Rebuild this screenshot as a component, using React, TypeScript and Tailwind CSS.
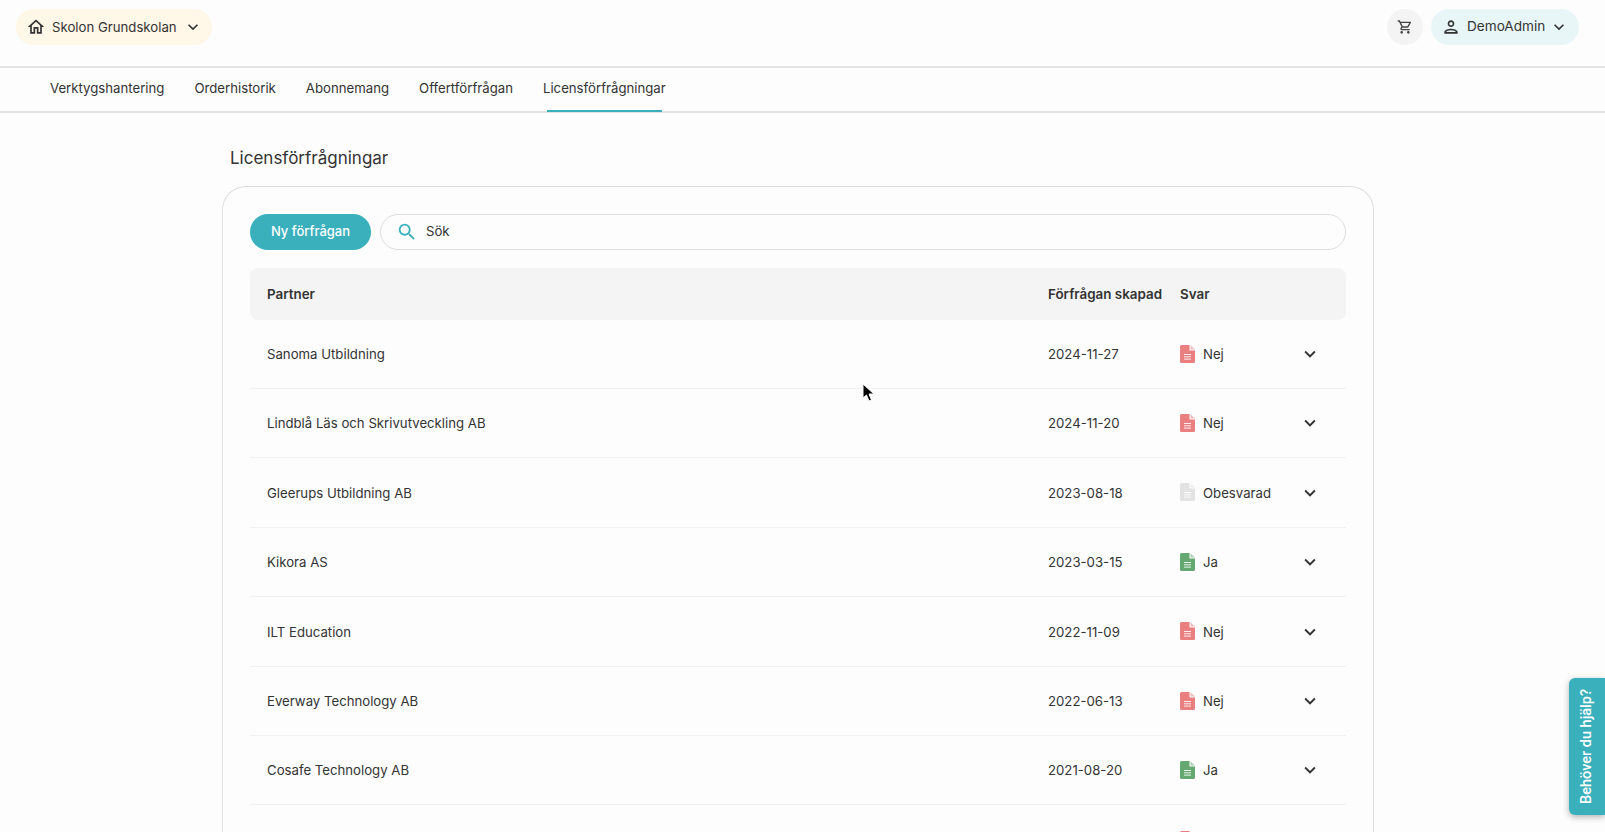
import { MdKeyboardArrowDown, MdOutlineHome, MdOutlinePerson, MdOutlineShoppingCart, MdSearch } from "react-icons/md";

type Answer = "Nej" | "Ja" | "Obesvarad";

const tabs = ["Verktygshantering", "Orderhistorik", "Abonnemang", "Offertförfrågan", "Licensförfrågningar"];

const rows: { partner: string; date: string; answer: Answer; height: string }[] = [
  { partner: "Sanoma Utbildning", date: "2024-11-27", answer: "Nej", height: "h-[69px]" },
  { partner: "Lindblå Läs och Skrivutveckling AB", date: "2024-11-20", answer: "Nej", height: "h-[69px]" },
  { partner: "Gleerups Utbildning AB", date: "2023-08-18", answer: "Obesvarad", height: "h-[70px]" },
  { partner: "Kikora AS", date: "2023-03-15", answer: "Ja", height: "h-[69px]" },
  { partner: "ILT Education", date: "2022-11-09", answer: "Nej", height: "h-[70px]" },
  { partner: "Everway Technology AB", date: "2022-06-13", answer: "Nej", height: "h-[69px]" },
  { partner: "Cosafe Technology AB", date: "2021-08-20", answer: "Ja", height: "h-[69px]" },
];

const answerColor: Record<Answer, { body: string; fold: string }> = {
  Nej: { body: "fill-[#e97f7f]", fold: "fill-[#f4bcbc]" },
  Ja: { body: "fill-[#66a872]", fold: "fill-[#aed2b6]" },
  Obesvarad: { body: "fill-[#e3e3e3]", fold: "fill-[#efefef]" },
};

// Page with a folded corner and three text lines
function DocIcon({ answer }: { answer: Answer }) {
  const color = answerColor[answer];
  return (
    <svg width="15" height="18" viewBox="0 0 15 18" className="shrink-0">
      <path className={color.body} d="M1.500 0H9.500V5.500H15V16.500A1.500 1.500 0 0 1 13.500 18H1.500A1.500 1.500 0 0 1 0 16.500V1.500A1.500 1.500 0 0 1 1.500 0Z" />
      <path className={color.fold} d="M10.500 0.300L15 4.500H10.500Z" />
      <path d="M4 9.500H11M4 11.800H11M4 14.100H11" stroke="#fff" strokeOpacity="0.85" strokeWidth="1" />
    </svg>
  );
}

function Row({ partner, date, answer, height }: (typeof rows)[number]) {
  return (
    <div className={`flex items-center border-b border-[#f2f2f2] ${height}`}>
      <div className="w-[780px] pl-[17px] pt-[2px]">{partner}</div>
      <div className="w-[150px] pl-[18px] pt-[2px]">{date}</div>
      <div className="flex w-[115px] items-center gap-2">
        <DocIcon answer={answer} />
        <span className="pt-[2px]">{answer}</span>
      </div>
      <MdKeyboardArrowDown className="ml-[4px] text-[22px] text-[#333]" />
    </div>
  );
}

export default function App() {
  return (
    <div className="relative h-screen overflow-hidden bg-[#fdfdfd] font-['Inter',sans-serif] text-[13.2px] text-[#333]">
      {/* Top bar */}
      <header className="flex h-[68px] items-start justify-between border-b-2 border-[#e3e3e3] px-4 pt-[9px]">
        <button className="flex h-9 w-[196px] items-center rounded-full bg-[#fff7e8] pl-[10px] text-[#333]">
          <MdOutlineHome className="text-[20px]" />
          <span className="ml-[6px] pt-[2px]">Skolon Grundskolan</span>
          <MdKeyboardArrowDown className="ml-[6px] text-[20px]" />
        </button>
        <div className="mr-[10px] flex items-center gap-2">
          <button className="flex size-9 items-center justify-center rounded-full bg-[#f4f4f4]">
            <MdOutlineShoppingCart className="text-[16px] text-[#444]" />
          </button>
          <button className="flex h-9 w-[148px] items-center rounded-full bg-[#e9f6f8] pl-[10px]">
            <MdOutlinePerson className="text-[20px]" />
            <span className="ml-[6px] pb-[2px] text-[13.6px]">DemoAdmin</span>
            <MdKeyboardArrowDown className="ml-[4px] text-[20px]" />
          </button>
        </div>
      </header>

      {/* Tabs */}
      <nav className="flex h-[45px] gap-[30px] border-b-2 border-[#e3e3e3] pl-[50px] text-[13.2px]">
        {tabs.map((tab, i) => (
          <div key={tab} className="relative flex h-[44px] items-center whitespace-nowrap pb-[2px]">
            {tab}
            {i === tabs.length - 1 && (
              <span className="absolute inset-x-1 bottom-0 h-[2px] bg-[#3bb0bd]" />
            )}
          </div>
        ))}
      </nav>

      <main className="ml-[222px] w-[1152px]">
        <h1 className="pl-2 pt-[33px] text-[17px] leading-6 text-[#333]">Licensförfrågningar</h1>

        <section className="mt-4 rounded-t-[24px] border border-b-0 border-[#dedede] px-[27px] pt-[27px]">
          <div className="flex gap-[9px]">
            <button className="h-9 w-[121px] rounded-full bg-[#3bb0bd] text-[13px] font-medium text-white">Ny förfrågan</button>
            <div className="flex h-9 flex-1 items-center rounded-full border border-[#dedede] pl-[15px]">
              <MdSearch className="text-[22px] text-[#3bb0bd]" />
              <span className="ml-[8px]">Sök</span>
            </div>
          </div>

          <div className="mt-[18px] flex h-[52px] items-center rounded-lg bg-[#f4f4f4] text-[13.4px] font-semibold">
            <div className="w-[780px] pl-[17px]">Partner</div>
            <div className="w-[150px] whitespace-nowrap pl-[18px]">Förfrågan skapad</div>
            <div>Svar</div>
          </div>

          {rows.map((row) => (
            <Row key={row.partner} {...row} />
          ))}
          <div className="flex h-[69px] items-center">
            <div className="ml-[930px]">
              <DocIcon answer="Nej" />
            </div>
          </div>
        </section>
      </main>

      {/* Help tab */}
      <button className="absolute bottom-[17px] right-0 flex h-[137px] w-9 items-center justify-center rounded-l-md bg-[#3bb0bd] font-['Roboto',sans-serif] text-[14.500px] font-medium text-white shadow-[0_2px_6px_rgba(0,0,0,0.3)]">
        <span className="rotate-180 whitespace-nowrap [writing-mode:vertical-rl]">Behöver du hjälp?</span>
      </button>

      {/* Mouse pointer */}
      <svg className="absolute left-[862px] top-[383px]" width="13" height="20" viewBox="0 0 13 20">
        <path d="M1 1v14l3.500-3 2.500 6 2.500-1-2.500-6H12z" fill="#000" stroke="#fff" strokeWidth="1" />
      </svg>
    </div>
  );
}
